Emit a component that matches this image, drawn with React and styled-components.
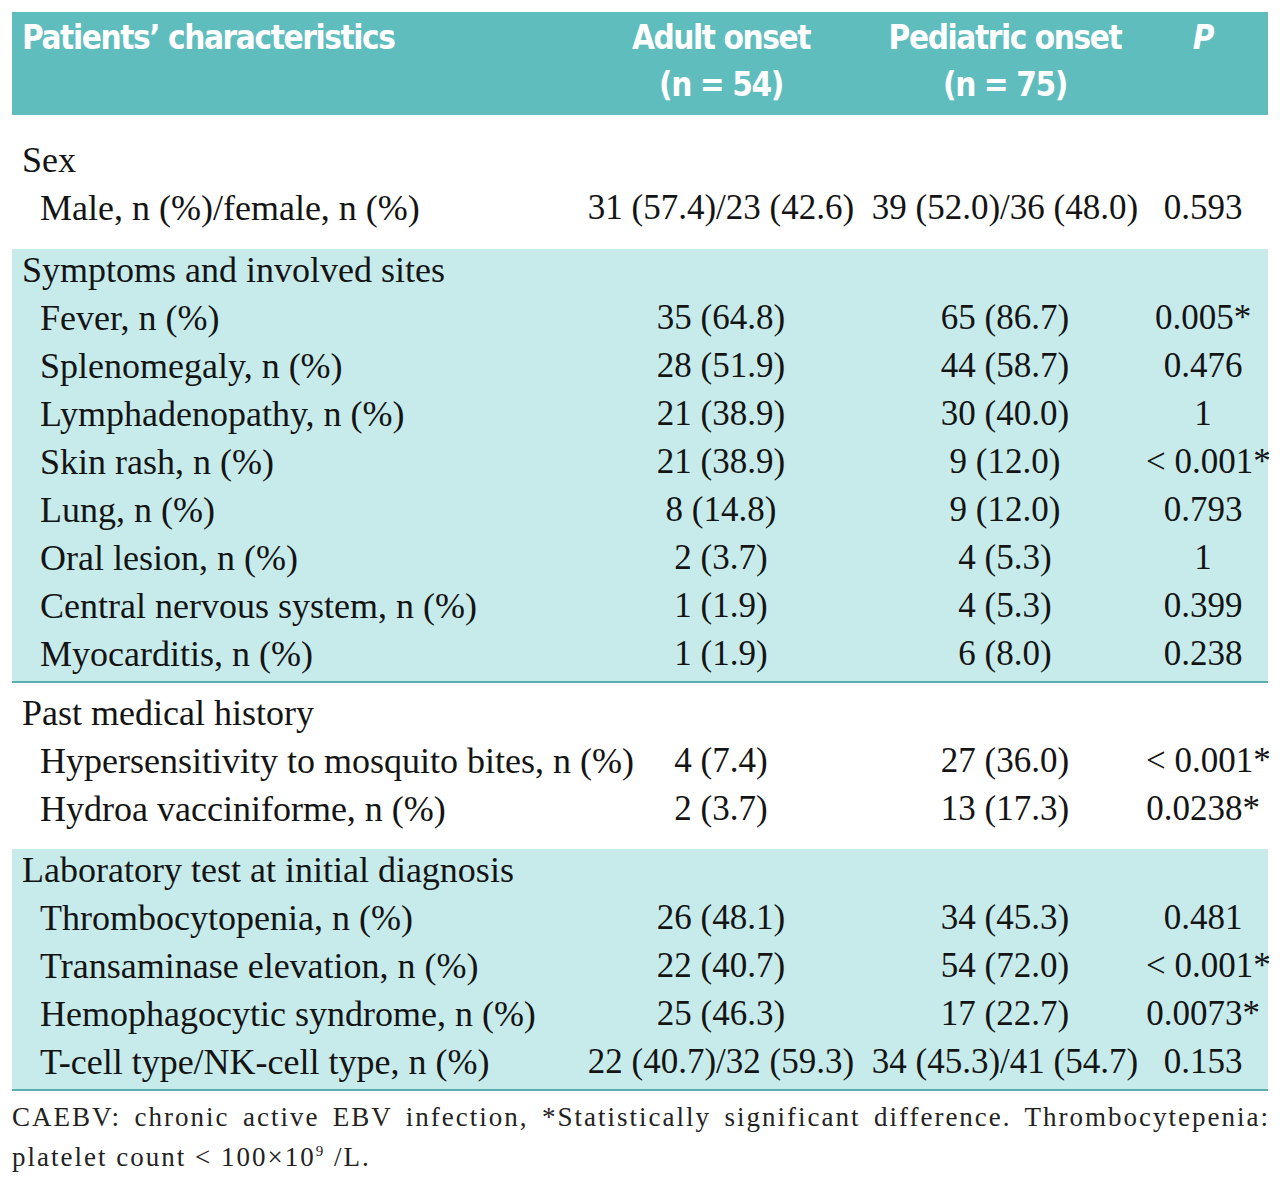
import React from "react";
import styled, { createGlobalStyle } from "styled-components";

const GlobalStyle = createGlobalStyle`
  body {
    margin: 0;
    background: #ffffff;
  }
`;

const Page = styled.div`
  width: 1280px;
  padding: 12px 12px 0 12px;
  box-sizing: border-box;
  font-family: "Liberation Serif", "Times New Roman", serif;
  color: #141414;
`;

const Table = styled.div`
  width: 1256px;
`;

const cols = "566px 286px 282px 114px";

const Header = styled.div`
  display: grid;
  grid-template-columns: ${cols};
  background: #5fbdbe;
  height: 103px;
  box-sizing: border-box;
  padding-top: 2px;
  color: #ffffff;
  font-family: "DejaVu Sans Condensed", "Liberation Sans", sans-serif;
  font-weight: 700;
  font-size: 33px;
  line-height: 47px;
  letter-spacing: -1.4px;
  white-space: nowrap;
`;

const HeadCell = styled.div`
  text-align: ${(p) => (p.left ? "left" : "center")};
  padding-left: ${(p) => (p.left ? "10px" : "0")};
  font-style: ${(p) => (p.italic ? "italic" : "normal")};
`;

const Section = styled.div`
  background: ${(p) => (p.shaded ? "#c7ebeb" : "#ffffff")};
  padding: ${(p) => p.pad || "0"};
  border-bottom: ${(p) => (p.line ? "2px solid #5aaeae" : "none")};
`;

const Row = styled.div`
  display: grid;
  grid-template-columns: ${cols};
  height: 48px;
  box-sizing: border-box;
  padding-bottom: ${(p) => (p.raise ? "6px" : "0")};
  align-items: center;
  line-height: 40px;
  white-space: nowrap;
`;

const Label = styled.div`
  padding-left: ${(p) => (p.sub ? "28px" : "10px")};
  font-size: 36px;
`;

const Value = styled.div`
  text-align: center;
  font-size: 35px;
`;

const Footnote = styled.div`
  margin-top: 6px;
  width: 1258px;
  font-family: "Liberation Serif", "Times New Roman", serif;
  font-size: 27px;
  line-height: 40px;
  letter-spacing: 2px;
  color: #222;
  white-space: nowrap;

  sup {
    font-size: 15px;
    line-height: 0;
  }
`;

const NoteLine = styled.div`
  text-align: ${(p) => (p.justify ? "justify" : "left")};
  text-align-last: ${(p) => (p.justify ? "justify" : "left")};
`;

const sections = [
  {
    title: "Sex",
    shaded: false,
    pad: "21px 0 17px 0",
    rows: [["Male, n (%)/female, n (%)", "31 (57.4)/23 (42.6)", "39 (52.0)/36 (48.0)", "0.593"]],
  },
  {
    title: "Symptoms and involved sites",
    shaded: true,
    line: true,
    rows: [
      ["Fever, n (%)", "35 (64.8)", "65 (86.7)", "0.005*"],
      ["Splenomegaly, n (%)", "28 (51.9)", "44 (58.7)", "0.476"],
      ["Lymphadenopathy, n (%)", "21 (38.9)", "30 (40.0)", "1"],
      ["Skin rash, n (%)", "21 (38.9)", "9 (12.0)", "< 0.001*"],
      ["Lung, n (%)", "8 (14.8)", "9 (12.0)", "0.793"],
      ["Oral lesion, n (%)", "2 (3.7)", "4 (5.3)", "1"],
      ["Central nervous system, n (%)", "1 (1.9)", "4 (5.3)", "0.399"],
      ["Myocarditis, n (%)", "1 (1.9)", "6 (8.0)", "0.238"],
    ],
  },
  {
    title: "Past medical history",
    shaded: false,
    pad: "6px 0 16px 0",
    rows: [
      ["Hypersensitivity to mosquito bites, n (%)", "4 (7.4)", "27 (36.0)", "< 0.001*"],
      ["Hydroa vacciniforme, n (%)", "2 (3.7)", "13 (17.3)", "0.0238*"],
    ],
  },
  {
    title: "Laboratory test at initial diagnosis",
    shaded: true,
    line: true,
    rows: [
      ["Thrombocytopenia, n (%)", "26 (48.1)", "34 (45.3)", "0.481"],
      ["Transaminase elevation, n (%)", "22 (40.7)", "54 (72.0)", "< 0.001*"],
      ["Hemophagocytic syndrome, n (%)", "25 (46.3)", "17 (22.7)", "0.0073*"],
      ["T-cell type/NK-cell type, n (%)", "22 (40.7)/32 (59.3)", "34 (45.3)/41 (54.7)", "0.153"],
    ],
  },
];

export default function App() {
  return (
    <Page>
      <GlobalStyle />
      <Table>
        <Header>
          <HeadCell left>Patients’ characteristics</HeadCell>
          <HeadCell>
            Adult onset
            <br />
            (n = 54)
          </HeadCell>
          <HeadCell>
            Pediatric onset
            <br />
            (n = 75)
          </HeadCell>
          <HeadCell italic>P</HeadCell>
        </Header>
        {sections.map((s) => (
          <Section key={s.title} shaded={s.shaded} line={s.line} pad={s.pad}>
            <Row raise={s.shaded}>
              <Label>{s.title}</Label>
            </Row>
            {s.rows.map((r) => (
              <Row key={r[0]} raise={s.shaded}>
                <Label sub>{r[0]}</Label>
                <Value>{r[1]}</Value>
                <Value>{r[2]}</Value>
                <Value>{r[3]}</Value>
              </Row>
            ))}
          </Section>
        ))}
      </Table>
      <Footnote>
        <NoteLine justify>
          CAEBV: chronic active EBV infection, *Statistically significant difference. Thrombocytepenia:
        </NoteLine>
        <NoteLine>
          platelet count &lt; 100×10<sup>9</sup> /L.
        </NoteLine>
      </Footnote>
    </Page>
  );
}
